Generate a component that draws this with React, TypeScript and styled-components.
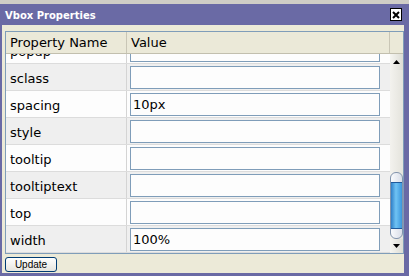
import React, { useLayoutEffect, useRef } from "react";
import styled, { createGlobalStyle } from "styled-components";

const GlobalStyle = createGlobalStyle`
    html, body {
        margin: 0;
        padding: 0;
        overflow: hidden;
        background: #cfcdc6;
    }
`;

// only the tail of the list is in view; the rest sits above the scroll position
const properties: { name: string; value: string }[] = [
    { name: "popup", value: "" },
    { name: "sclass", value: "" },
    { name: "spacing", value: "10px" },
    { name: "style", value: "" },
    { name: "tooltip", value: "" },
    { name: "tooltiptext", value: "" },
    { name: "top", value: "" },
    { name: "width", value: "100%" },
];

const App = () => {
    const scrollRef = useRef<HTMLDivElement>(null);

    useLayoutEffect(() => {
        if (scrollRef.current) {
            scrollRef.current.scrollTop = scrollRef.current.scrollHeight;
        }
    }, []);

    return (
        <>
            <GlobalStyle />
            <Desktop>
                <Window>
                    <TitleBar>
                        <Title>Vbox Properties</Title>
                        <CloseButton>
                            <svg width="8" height="8" viewBox="0 0 8 8">
                                <path d="M1 1 L7 7 M7 1 L1 7" stroke="#000" strokeWidth="2" />
                            </svg>
                        </CloseButton>
                    </TitleBar>
                    <Body>
                        <Grid>
                            <HeaderRow>
                                <HeaderCell>Property Name</HeaderCell>
                                <HeaderCell>Value</HeaderCell>
                                <HeaderCell />
                            </HeaderRow>
                            <GridBody>
                                <Rows ref={scrollRef}>
                                    {properties.map((p, i) => (
                                        <Row key={p.name} $shaded={i % 2 === 1}>
                                            <NameCell>{p.name}</NameCell>
                                            <ValueCell>
                                                <Input defaultValue={p.value} />
                                            </ValueCell>
                                        </Row>
                                    ))}
                                </Rows>
                                <ScrollBar>
                                    <ArrowButton $height={16}>
                                        <svg width="7" height="4" viewBox="0 0 7 4">
                                            <path d="M0 4 L3.5 0 L7 4 Z" fill="#000" />
                                        </svg>
                                    </ArrowButton>
                                    <Track>
                                        <Thumb>
                                            <ThumbCore />
                                        </Thumb>
                                    </Track>
                                    <ArrowButton $height={14}>
                                        <svg width="7" height="4" viewBox="0 0 7 4">
                                            <path d="M0 0 L7 0 L3.5 4 Z" fill="#000" />
                                        </svg>
                                    </ArrowButton>
                                </ScrollBar>
                            </GridBody>
                        </Grid>
                        <Footer>
                            <Button>Update</Button>
                        </Footer>
                    </Body>
                </Window>
            </Desktop>
        </>
    );
};

export default App;

const Desktop = styled.div`
    width: 409px;
    height: 276px;
    padding-top: 4px;
    box-sizing: border-box;
    background: #cfcdc6;
`;

const Window = styled.div`
    height: 272px;
    background: #6a6aa5;
    display: flex;
    flex-direction: column;
`;

const TitleBar = styled.div`
    height: 21px;
    padding: 0 7px 0 5px;
    display: flex;
    align-items: center;
    justify-content: space-between;
`;

const Title = styled.span`
    font-family: "DejaVu Sans", sans-serif;
    font-weight: bold;
    font-size: 10px;
    color: #fff;
    margin-top: 1px;
`;

const CloseButton = styled.div`
    width: 12px;
    height: 13px;
    box-sizing: border-box;
    background: #fff;
    border: 1px solid #000;
    display: flex;
    align-items: center;
    justify-content: center;
`;

const Body = styled.div`
    flex: 1;
    margin: 0 5px 3px 2px;
    padding: 6px 0 0 3px;
    background: #ecead8;
    display: flex;
    flex-direction: column;
`;

const Grid = styled.div`
    width: 399px;
    border: 1px solid #7f9db9;
    box-sizing: border-box;
    background: #fff;
`;

const HeaderRow = styled.div`
    display: grid;
    grid-template-columns: 121px 263px 13px;
    height: 21px;
    background: #ebe9d8;
    border-bottom: 1px solid #c2bfae;
`;

const HeaderCell = styled.div`
    font-family: "DejaVu Sans", sans-serif;
    font-size: 13px;
    color: #000;
    padding-left: 4px;
    display: flex;
    align-items: center;
    border-right: 1px solid #c9c6b6;
    &:last-child {
        border-right: none;
        padding: 0;
    }
`;

const GridBody = styled.div`
    display: flex;
    height: 199px;
`;

const Rows = styled.div`
    width: 384px;
    height: 199px;
    overflow: hidden;
`;

const Row = styled.div<{ $shaded: boolean }>`
    display: grid;
    grid-template-columns: 121px 263px;
    height: 27px;
    box-sizing: border-box;
    border-bottom: 1px solid #dcdcdc;
    background: ${(p) => (p.$shaded ? "#efefef" : "#fdfdfd")};
`;

const NameCell = styled.div`
    font-family: "DejaVu Sans", sans-serif;
    font-size: 13px;
    color: #000;
    padding: 2px 0 0 4px;
    display: flex;
    align-items: center;
    border-right: 1px solid #d4d4d4;
`;

const ValueCell = styled.div`
    padding-left: 3px;
    display: flex;
    align-items: center;
`;

const Input = styled.input`
    width: 250px;
    height: 23px;
    box-sizing: border-box;
    border: 1px solid #7f9db9;
    background: #fdfdfd;
    padding: 0 2px;
    margin: 0;
    font-family: "DejaVu Sans", sans-serif;
    font-size: 13px;
    color: #000;
    outline: none;
`;

const ScrollBar = styled.div`
    width: 13px;
    display: flex;
    flex-direction: column;
    background: linear-gradient(to right, #f3f2ee, #e4e3dc);
`;

const ArrowButton = styled.div<{ $height: number }>`
    height: ${(p) => p.$height}px;
    display: flex;
    align-items: center;
    justify-content: center;
    background: linear-gradient(to right, #f6f6f2, #dcdcd4);
`;

const Track = styled.div`
    flex: 1;
    display: flex;
    flex-direction: column;
    justify-content: flex-end;
`;

const Thumb = styled.div`
    height: 67px;
    box-sizing: border-box;
    border: 1px solid #8294ad;
    border-radius: 6px;
    background: linear-gradient(to right, #fafbfd, #d9dee8);
    display: flex;
    flex-direction: column;
    padding: 9px 0;
`;

const ThumbCore = styled.div`
    flex: 1;
    border-top: 1px solid #1e5a9c;
    border-bottom: 1px solid #1e5a9c;
    background: linear-gradient(to right, #2f7fc8, #6fc3f4 45%, #3b96dc);
`;

const Footer = styled.div`
    padding-top: 3px;
    display: flex;
`;

const Button = styled.button`
    width: 52px;
    height: 15px;
    box-sizing: border-box;
    padding: 0;
    border: 1px solid #003c74;
    border-radius: 3px;
    background: linear-gradient(#ffffff, #e6e5de);
    font-family: "Liberation Sans", sans-serif;
    font-size: 10px;
    color: #000;
    display: flex;
    align-items: center;
    justify-content: center;
`;
